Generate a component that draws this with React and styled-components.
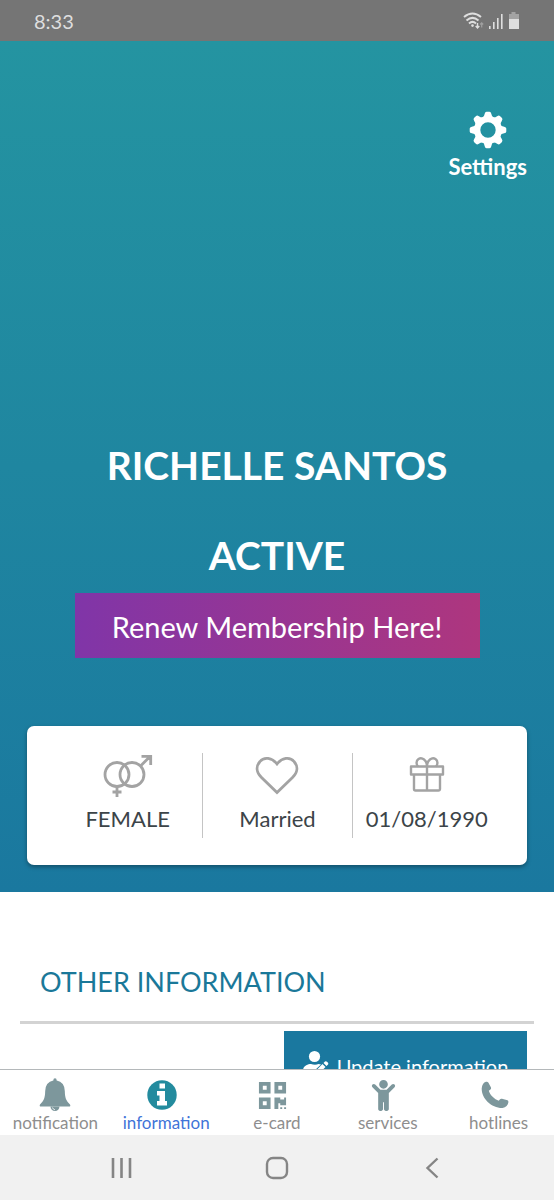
import styled, { createGlobalStyle } from 'styled-components';
import { FaQrcode, FaChild } from 'react-icons/fa';

const GlobalStyle = createGlobalStyle`
* {
box-sizing: border-box;
}
body {
margin: 0;
font-family: Lato, "Open Sans", sans-serif;
background: #ffffff;
}
button {
font-family: inherit;
border: none;
padding: 0;
background: none;
cursor: pointer;
}
`

const Screen = styled.div`
display: flex;
flex-direction: column;
height: 100vh;
`

const StatusBar = styled.header`
display: flex;
flex: none;
align-items: center;
justify-content: space-between;
height: 41px;
padding: 0 34px;
background: #757575;
color: #dedede;
font-size: 20px;
`

const StatusIcons = styled.div`
display: flex;
align-items: center;
gap: 5px;
`

const Content = styled.main`
flex: 1;
min-height: 0;
overflow-y: auto;
scrollbar-width: none;
`

const Hero = styled.section`
display: flex;
flex-direction: column;
align-items: center;
padding: 70px 27px 27px;
background: linear-gradient(#2494a1, #1a789f);
color: #ffffff;
`

const SettingsButton = styled.button`
display: flex;
flex-direction: column;
align-items: center;
align-self: flex-end;
gap: 4px;
color: #ffffff;
font-size: 22px;
font-weight: 700;
line-height: 28px;
`

const HeroText = styled.h1`
margin: ${props => props.$top}px 0 0;
font-size: 39px;
font-weight: 700;
line-height: 48px;
text-align: center;
`

const RenewButton = styled.button`
width: 81%;
height: 65px;
margin-top: 14px;
padding-top: 2px;
background: linear-gradient(to right, #8035a8, #ae367e);
color: #ffffff;
font-size: 29px;
`

const Card = styled.ul`
display: grid;
grid-template-columns: repeat(3, 1fr);
width: 100%;
margin: 68px 0 0;
padding: 27px 26px;
border-radius: 7px;
background: #ffffff;
box-shadow: 0 2px 4px rgba(0, 0, 0, 0.35);
list-style: none;
`

const CardItem = styled.li`
display: flex;
flex-direction: column;
align-items: center;
gap: 8px;
height: 85px;
color: #3c4448;
font-size: 22px;
line-height: 28px;

& + & {
border-left: 1px solid #c4c4c4;
}
`

const Section = styled.section`
padding: 0 20px;
`

const SectionTitle = styled.h2`
margin: 0;
padding: 72px 20px 21px;
border-bottom: 3px solid #d3d3d3;
color: #1a7899;
font-size: 27px;
font-weight: 400;
line-height: 36px;
`

const UpdateButton = styled.button`
display: flex;
align-items: center;
justify-content: center;
gap: 8px;
width: 243px;
height: 70px;
margin: 7px 7px 40px auto;
background: #1a789f;
color: #ffffff;
font-size: 20px;
`

const TabBar = styled.nav`
display: grid;
flex: none;
grid-template-columns: repeat(5, 1fr);
height: 66px;
border-top: 1px solid #b4b8ba;
background: #ffffff;
`

const Tab = styled.a`
display: flex;
flex-direction: column;
align-items: center;
padding-top: 8px;
color: ${props => (props.$active ? '#3f74d8' : '#8e8e8e')};
font-size: 17px;
line-height: 22px;
text-decoration: none;
`

const TabIcon = styled.span`
display: flex;
align-items: center;
height: 34px;
padding-right: 8px;
color: ${props => (props.$active ? '#238b9e' : '#7d979c')};
`

const SystemBar = styled.footer`
display: grid;
flex: none;
grid-template-columns: repeat(3, 1fr);
height: 65px;
padding: 0 44px;
background: #f1f1f1;
`

const SystemButton = styled.button`
display: flex;
align-items: center;
justify-content: center;
`

const WifiIcon = () => (
  <svg width="21" height="18" viewBox="0 0 21 18" fill="none" stroke="#dedede" strokeWidth="2">
    <path d="M1 5Q9.5 -2 18 5M3.5 8.4Q9.5 3.4 15.5 8.4M6 11.4Q9.5 8.4 13 11.4" />
    <circle cx="9.5" cy="13.6" r="1.3" fill="#dedede" stroke="none" />
    <path d="M14.5 11v5M12.7 14l1.8 2 1.8-2" strokeWidth="1.4" />
    <path d="M18.7 15.5V11M17.2 12.5l1.5-1.7 1.5 1.7" stroke="#a0a0a0" strokeWidth="1.2" />
  </svg>
)

const SignalIcon = () => (
  <svg width="14" height="18" viewBox="0 0 14 18" fill="#dedede">
    <path d="M0 14h1.6v3H0zM4 10h1.6v7H4zM8 6h1.6v11H8zM12 2h1.6v15H12z" />
  </svg>
)

const BatteryIcon = () => (
  <svg width="12" height="18" viewBox="0 0 12 18">
    <path d="M3.5 0h4v2h3.5v5H1V2h2.5z" fill="#a3a3a3" />
    <path d="M1 7h10v10H1z" fill="#dedede" />
  </svg>
)

const GearIcon = () => (
  <svg width="38" height="38" viewBox="-19 -19 38 38">
    <circle r="10.8" fill="none" stroke="currentColor" strokeWidth="6.2" />
    {[0, 45, 90, 135, 180, 225, 270, 315].map(angle => (
      <path
        key={angle}
        d="M-5.6-12.3Q-3.8-13-3.3-16.2Q-2.9-18.3-1.5-18.3H1.5Q2.9-18.3 3.3-16.2Q3.8-13 5.6-12.3z"
        fill="currentColor"
        transform={`rotate(${angle})`}
      />
    ))}
  </svg>
)

const GenderIcon = () => (
  <svg width="50" height="44" viewBox="0 0 50 44" fill="none" stroke="#a3a3a3" strokeWidth="2.8">
    <circle cx="14" cy="21.5" r="12" />
    <circle cx="29" cy="21.5" r="12" />
    <path d="M14 33.5v10.5M9.5 39h9M37.5 13L47 3.5M38.5 3.4h9.2v8.6" />
  </svg>
)

const HeartIcon = () => (
  <svg width="44" height="44" viewBox="0 0 44 44" fill="none" stroke="#a3a3a3" strokeWidth="2.8">
    <path d="M22 11C17 4.5 9 3.5 5 8.5C0.5 13.5 1.5 19.5 6.5 24.5L22 39.5L37.5 24.5C42.5 19.5 43.5 13.5 39 8.5C35 3.5 27 4.5 22 11z" />
  </svg>
)

const GiftIcon = () => (
  <svg width="36" height="44" viewBox="0 0 36 44" fill="none" stroke="#a3a3a3" strokeWidth="2.4" strokeLinejoin="round">
    <path d="M2 13.5h32v8H2zM5 21.5h26V36a1.5 1.5 0 0 1-1.5 1.5h-23A1.5 1.5 0 0 1 5 36zM18 13.5v24" />
    <path d="M18 13.5C18 7 13 4 9.5 6C6.5 8 7.5 12 9 13.5M18 13.5C18 7 23 4 26.5 6C29.5 8 28.5 12 27 13.5" />
  </svg>
)

const UserEditIcon = () => (
  <svg width="26" height="32" viewBox="0 0 26 32" fill="currentColor">
    <circle cx="11.5" cy="6.5" r="5.6" />
    <path d="M0 23V20.5C0 16 4.5 14 8 14C10.5 15 13.5 15 15.5 14L18 14.5L11 21V24H2Q0 24 0 23z" />
    <path d="M22 11.5Q23 10.8 24 11.8L25 12.8Q25.6 13.8 25 14.5L23.5 16L20.5 13zM19.5 14L22.5 17L16 23.5L12.5 24L13 20.5z" />
  </svg>
)

// 8px of space on the left keeps the bell centred over its label
const BellIcon = () => (
  <svg width="40" height="34" viewBox="-8 0 40 34" fill="currentColor">
    <path d="M14.3 2.5Q14.3 0.3 16 0.3T17.7 2.5Q25.5 4 25.8 13C26 20 27 22.5 31 26.5Q32 28.5 30 28.5H2Q0 28.5 1 26.5C5 22.5 6 20 6.2 13Q6.5 4 14.3 2.5z" />
    <path d="M11.5 28.5h9A4.5 4.5 0 0 1 11.5 28.5z" />
    <path d="M13.5 29.5Q14 31.5 16 31.8" fill="none" stroke="#ffffff" strokeWidth="0.8" />
  </svg>
)

const InfoIcon = () => (
  <svg width="30" height="30" viewBox="0 0 30 30">
    <circle cx="15" cy="15" r="14.7" fill="currentColor" />
    <path d="M12.5 3.5h5.5v5h-5.5zM10 11h8v10h2v4.500H10V21h2.500v-5.500H10z" fill="#ffffff" />
  </svg>
)

const PhoneIcon = () => (
  <svg width="28" height="28" viewBox="0 0 28 28" fill="currentColor">
    <path d="M5 0.8Q6.5 0.3 7.3 1.5L10 6.5Q10.5 8 9.2 8.8L7.8 9.8C9 14 13.5 18.5 17.8 19.8L18.8 18.5Q19.7 17.4 21 17.8L26.5 19.3Q27.6 19.8 27.4 21.2C27 24 25 26.5 21.5 27C10.5 27.2 0.5 17.5 0.7 7.5C1 4 2.5 1.5 5 0.8z" />
  </svg>
)

const tabs = [
  { name: 'notification', icon: <BellIcon /> },
  { name: 'information', icon: <InfoIcon />, active: true },
  { name: 'e-card', icon: <FaQrcode size={31} /> },
  { name: 'services', icon: <FaChild size={31} /> },
  { name: 'hotlines', icon: <PhoneIcon /> },
]

const App = () => {
  return (
    <Screen>
      <GlobalStyle />
      <StatusBar>
        <span>8:33</span>
        <StatusIcons>
          <WifiIcon />
          <SignalIcon />
          <BatteryIcon />
        </StatusIcons>
      </StatusBar>
      <Content>
        <Hero>
          <SettingsButton>
            <GearIcon />
            Settings
          </SettingsButton>
          <HeroText $top={260}>RICHELLE SANTOS</HeroText>
          <HeroText as="p" $top={42}>ACTIVE</HeroText>
          <RenewButton>Renew Membership Here!</RenewButton>
          <Card>
            <CardItem><GenderIcon />FEMALE</CardItem>
            <CardItem><HeartIcon />Married</CardItem>
            <CardItem><GiftIcon />01/08/1990</CardItem>
          </Card>
        </Hero>
        <Section>
          <SectionTitle>OTHER INFORMATION</SectionTitle>
          <UpdateButton>
            <UserEditIcon />
            Update information
          </UpdateButton>
        </Section>
      </Content>
      <TabBar>
        {tabs.map(tab => (
          <Tab key={tab.name} href={`#${tab.name}`} $active={tab.active}>
            <TabIcon $active={tab.active}>{tab.icon}</TabIcon>
            {tab.name}
          </Tab>
        ))}
      </TabBar>
      <SystemBar>
        <SystemButton aria-label="Recent apps">
          <svg width="22" height="22" viewBox="0 0 22 22" stroke="#858585" strokeWidth="2.6">
            <path d="M2 1v20M10.5 1v20M19 1v20" />
          </svg>
        </SystemButton>
        <SystemButton aria-label="Home">
          <svg width="24" height="24" viewBox="0 0 24 24" fill="none" stroke="#858585" strokeWidth="2.4">
            <rect x="2" y="2" width="20" height="20" rx="6" />
          </svg>
        </SystemButton>
        <SystemButton aria-label="Back">
          <svg width="14" height="22" viewBox="0 0 14 22" fill="none" stroke="#858585" strokeWidth="2.4">
            <path d="M12.5 1.5L2.5 11l10 9.5" />
          </svg>
        </SystemButton>
      </SystemBar>
    </Screen>
  )
}

export default App;
